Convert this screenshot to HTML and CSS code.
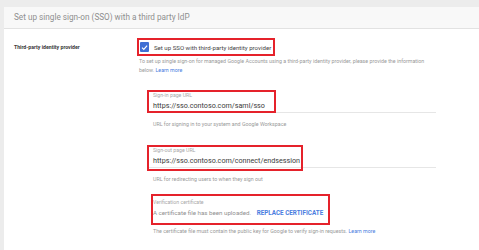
FILE: index.html
```html
<!DOCTYPE html>
<html>
<head>
<meta charset="utf-8">
<link rel="stylesheet" href="styles.css">
</head>
<body>
<div class="card">
  <div class="card-head">Set up single sign-on (SSO) with a third party IdP</div>
  <div class="card-body">
    <div class="row-label">Third-party identity provider</div>
    <div class="row-content">
      <div class="check-row">
        <span class="checkbox"><svg viewBox="0 0 10 10" width="9" height="9"><path d="M2.2 5.2 L4.2 7.1 L7.9 3" fill="none" stroke="#fff" stroke-width="1.3"/></svg></span>
        <span class="check-text">Set up SSO with third-party identity provider</span>
        <span class="mark mark-check"></span>
      </div>
      <div class="desc">
        <div>To set up single sign-on for managed Google Accounts using a third-party identity provider, please provide the information</div>
        <div>below. <a class="link">Learn more</a></div>
      </div>

      <div class="field field-in">
        <div class="field-label">Sign-in page URL</div>
        <div class="field-value underline">https://sso.contoso.com/saml/sso</div>
        <span class="mark mark-in"></span>
      </div>
      <p class="help help-in">URL for signing in to your system and Google Workspace</p>

      <div class="field field-out">
        <div class="field-label">Sign-out page URL</div>
        <div class="field-value underline">https://sso.contoso.com/connect/endsession</div>
        <span class="mark mark-out"></span>
      </div>
      <p class="help help-out">URL for redirecting users to when they sign out</p>

      <div class="field field-cert">
        <div class="field-label">Verification certificate</div>
        <div class="field-value cert">A certificate file has been uploaded. <span class="replace">REPLACE CERTIFICATE</span></div>
        <span class="mark mark-cert"></span>
      </div>
      <p class="help help-cert">The certificate file must contain the public key for Google to verify sign-in requests. <a class="link">Learn more</a></p>
    </div>
  </div>
</div>
</body>
</html>
```

FILE: styles.css
```css
* { box-sizing: border-box; }
html, body { margin: 0; padding: 0; }
body {
  background: #ececec;
  font-family: Roboto, "Noto Sans", Arial, sans-serif;
  width: 479px;
  height: 250px;
  overflow: hidden;
}
.card {
  margin: 7px 0 0 4px;
  background: #fff;
  height: 243px;
}
.card-head {
  height: 22px;
  line-height: 21px;
  padding-left: 10px;
  font-size: 8.2px;
  color: #8f8f8f;
  background: #f8f8f8;
  border-bottom: 1px solid #e2e2e2;
}
.card-body {
  display: grid;
  grid-template-columns: 125px 1fr;
  padding: 12px 0 0 10px;
}
.row-label {
  font-size: 5.2px;
  font-weight: 700;
  color: #3a3a3a;
  line-height: 12px;
}
.row-content { position: relative; }
.check-row {
  position: relative;
  display: flex;
  align-items: center;
  gap: 5px;
  height: 12px;
  padding-left: 1px;
}
.checkbox {
  width: 9px;
  height: 10px;
  background: #3f6fd4;
  border-radius: 1px;
  display: flex;
  align-items: center;
  justify-content: center;
}
.check-text {
  font-size: 6.1px;
  color: #444;
}
.desc {
  margin: 3.5px 0 0;
  font-size: 5.3px;
  line-height: 9px;
  color: #9a9a9a;
  white-space: nowrap;
}
.link { color: #4a7de0; }
.field {
  position: relative;
  margin-left: 14px;
  width: 283px;
}
.field-in { margin-top: 16.5px; }
.field-out { margin-top: 17.5px; }
.field-cert { margin-top: 14px; }
.field-label {
  font-size: 5.2px;
  line-height: 9px;
  color: #a8a8a8;
}
.field-value {
  font-size: 7.2px;
  line-height: 12px;
  color: #3a3a3a;
}
.underline {
  margin-left: -6px;
  padding-left: 6px;
  border-bottom: 1px solid #e6e6e6;
}
.cert {
  color: #8f8f8f;
  font-size: 6.2px;
  line-height: 13px;
}
.replace {
  color: #4a7de0;
  font-weight: 700;
  font-size: 6.3px;
  margin-left: 4px;
}
.help {
  margin: 6.5px 0 0 14px;
  font-size: 5.3px;
  line-height: 9px;
  color: #9a9a9a;
}
.help-cert { margin-top: 7px; }
.mark {
  position: absolute;
  border: 2px solid #e5222b;
  pointer-events: none;
}
.mark-check { left: -2px; top: -3px; width: 138px; height: 18px; }
.mark-in { left: -6px; top: -1px; width: 129px; height: 23px; }
.mark-out { left: -6px; top: -1px; width: 156px; height: 26px; }
.mark-cert { left: -2px; top: -3.5px; width: 179px; height: 31px; }
```
